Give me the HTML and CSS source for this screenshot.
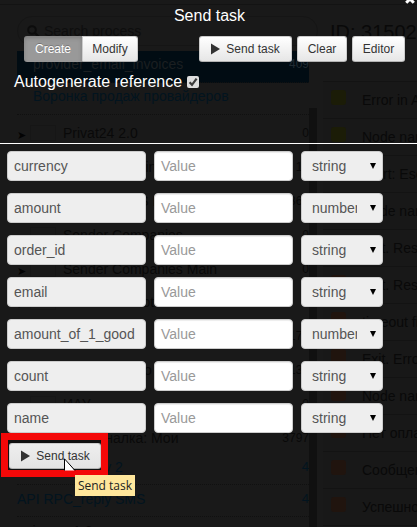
FILE: index.html
```html
<!DOCTYPE html>
<html lang="en">
<head>
<meta charset="utf-8">
<title>Send task</title>
<link rel="stylesheet" href="styles.css">
</head>
<body>
<div class="stage">
  <div class="page">
    <div class="processes">
      <div class="search">
        <svg width="13" height="13" viewBox="0 0 13 13"><circle cx="5" cy="5" r="3.8" fill="none" stroke="#0c0c0c" stroke-width="2"/><path d="M8 8l4 4" stroke="#0c0c0c" stroke-width="2.4"/></svg>
        <span>Search process</span>
      </div>
      <div class="proc active"><span>provider_email_invoices</span><b>409</b></div>
      <div class="proc link second"><span>Воронка продаж провайдеров</span></div>
      <div class="tree">
        <div class="folder"><i class="arrow">➤</i><i class="thumb"></i><span>Privat24 2.0</span><b>0</b></div>
        <div class="folder"><i class="arrow"></i><i class="thumb"></i><span>Privat marketing</span><b>10</b></div>
        <div class="folder"><i class="arrow"></i><i class="thumb"></i><span>Privat24 SMS H</span><b>368</b></div>
        <div class="folder"><i class="arrow"></i><i class="thumb"></i><span>Sender Companies</span><b>0</b></div>
        <div class="folder"><i class="arrow">➤</i><i class="thumb"></i><span>Sender Companies Main</span><b>0</b></div>
        <div class="folder"><i class="arrow">➤</i><i class="thumb"></i><span>Senderinnobot</span><b>0</b></div>
        <div class="folder"><i class="arrow"></i><i class="thumb"></i><span>Privat</span><b>177</b></div>
        <div class="folder"><i class="arrow"></i><i class="thumb"></i><span>Интернет-про</span><b>136</b></div>
        <div class="folder"><i class="arrow"></i><i class="thumb"></i><span>ИАУ</span><b>0</b></div>
        <div class="folder"><i class="arrow">➤</i><i class="thumb"></i><span>Коммуналка: Мои</span><b>3797</b></div>
      </div>
      <div class="proc link flat"><span>API RPC_reply 2</span><b>4</b></div>
      <div class="proc link flat"><span>API RPC_reply SMS</span><b>4</b></div>
      <div class="proc flat"><span>api_copy1 2</span></div>
    </div>
    <div class="scrollbar"></div>
    <div class="nodes">
      <h2>ID: 31502</h2>
      <div class="node"><i class="lime"></i>Error in API</div>
      <div class="node"><i class="lime"></i>Node name</div>
      <div class="node"><i></i>Start: Escal</div>
      <div class="node"><i></i>Node name</div>
      <div class="node"><i></i>Exit. Result</div>
      <div class="node"><i></i>Exit. Result</div>
      <div class="node"><i></i>timeout final</div>
      <div class="node"><i></i>Exit. Error</div>
      <div class="node"><i></i>Node name</div>
      <div class="node"><i></i>Нет оплаты</div>
      <div class="node"><i></i>Сообщение</div>
      <div class="node"><i></i>Успешно</div>
    </div>
  </div>

  <div class="modal">
    <svg class="close" width="10" height="10" viewBox="0 0 10 10"><path d="M1.2 1.2l7.6 7.6M8.8 1.2L1.2 8.8" stroke="#fff" stroke-width="3"/></svg>
    <h1>Send task</h1>
    <div class="toolbar">
      <div class="group"><button class="btn pressed">Create</button><button class="btn">Modify</button></div>
      <div class="actions">
        <button class="btn send"><svg width="9" height="12" viewBox="0 0 9 12"><path d="M0 .5L9 6 0 11.5z" fill="#333"/></svg>Send task</button>
        <button class="btn clear">Clear</button>
        <button class="btn editor">Editor</button>
      </div>
    </div>
    <div class="auto"><span>Autogenerate reference</span><i class="check"><svg width="12" height="12" viewBox="0 0 12 12"><path d="M2.6 6.2L5 8.8 9.6 2.6" fill="none" stroke="#3c3c3c" stroke-width="2.2"/></svg></i></div>
    <div class="params">
      <div class="field key">currency</div><div class="field value">Value</div><div class="field type"><span>string</span><i></i></div>
      <div class="field key">amount</div><div class="field value">Value</div><div class="field type"><span>number</span><i></i></div>
      <div class="field key">order_id</div><div class="field value">Value</div><div class="field type"><span>string</span><i></i></div>
      <div class="field key">email</div><div class="field value">Value</div><div class="field type"><span>string</span><i></i></div>
      <div class="field key">amount_of_1_good</div><div class="field value">Value</div><div class="field type"><span>number</span><i></i></div>
      <div class="field key">count</div><div class="field value">Value</div><div class="field type"><span>string</span><i></i></div>
      <div class="field key">name</div><div class="field value">Value</div><div class="field type"><span>string</span><i></i></div>
    </div>
    <div class="highlight">
      <button class="btn hover"><svg width="9" height="12" viewBox="0 0 9 12"><path d="M0 .5L9 6 0 11.5z" fill="#333"/></svg>Send task</button>
      <svg class="cursor" width="12" height="13" viewBox="0 0 12 13"><path d="M.5 0V12.5H10.5z" fill="#fff"/><path d="M.5 12.5V.8L11 12.5" fill="none" stroke="#000"/></svg>
      <div class="tip">Send task</div>
    </div>
  </div>
</div>
</body>
</html>
```

FILE: styles.css
```css
* { box-sizing: border-box; }
body {
  margin: 0;
  background: #191919;
  font-family: "Liberation Sans", Arial, sans-serif;
  font-size: 14px;
  overflow: hidden;
}
i, b { font-style: normal; font-weight: normal; }
.stage {
  display: grid;
  width: 417px;
  height: 527px;
  overflow: hidden;
}
.page, .modal { grid-area: 1 / 1; min-width: 0; min-height: 0; }

/* dimmed page */
.page {
  display: flex;
  height: 527px;
  overflow: hidden;
  padding-left: 17px;
  color: #090909;
  background: linear-gradient(#131313, #131313) 0 4px / 100% 1px no-repeat;
  white-space: nowrap;
}
.processes { width: 292px; flex: none; }
.search {
  display: flex;
  align-items: center;
  gap: 4px;
  width: 301px;
  height: 30px;
  margin: 16px 0 5px;
  padding-left: 9px;
  border: 1px solid #151515;
  border-radius: 15px;
  color: #0e0e0e;
}
.proc {
  display: flex;
  justify-content: space-between;
  align-items: center;
  height: 32px;
  padding-left: 16px;
  border-bottom: 1px dotted #101010;
}
.proc b, .folder b { font-size: 12px; }
.proc.flat b { font-size: 13px; }
.active { background: #010c13; color: #1b1f21; }
.active span, .active b { padding-bottom: 6px; }
.active b { font-size: 12px; color: #202b32; }
.link { color: #02141f; }
.second span { padding-bottom: 5px; }
.proc.flat { padding: 0 0 4px; }
.tree { height: 338px; padding-top: 1px; }
.folder {
  display: flex;
  align-items: center;
  height: 33.9px;
}
.arrow { width: 13px; font: 11px "DejaVu Sans", sans-serif; color: #030303; padding-top: 5px; }
.thumb { width: 26px; height: 16px; border: 1px solid #161616; margin-right: 7px; }
.folder span { flex: 1; }
.scrollbar { flex: none; width: 8px; margin-top: 108px; background: #101010; }
.nodes { flex: none; width: 110px; margin-left: 6px; }
.nodes h2 {
  margin: 0;
  height: 82px;
  padding: 21px 0 0 7px;
  font-size: 20px;
  line-height: 23px;
  font-weight: normal;
  border-bottom: 1px solid #131313;
}
.node {
  display: flex;
  align-items: center;
  gap: 16px;
  height: 37px;
  padding-left: 8px;
  border-bottom: 1px solid #131313;
  background: #181818;
}
.node i {
  flex: none;
  width: 15px;
  height: 15px;
  margin-bottom: 5px;
  border-radius: 3px;
  background: #20140e;
}
.node .lime { background: #1b1c07; }

/* modal */
.modal { position: relative; color: #fff; }
.close { position: absolute; left: 405px; top: -6px; }
.modal h1 {
  margin: 0;
  padding: 6px 0 0 2px;
  height: 36px;
  font-size: 16px;
  line-height: 19px;
  font-weight: normal;
  text-align: center;
}
.toolbar {
  display: flex;
  justify-content: space-between;
  padding: 0 12px 0 24px;
}
.group { display: flex; }
.actions { display: flex; gap: 5px; }
.btn {
  display: flex;
  align-items: center;
  justify-content: center;
  gap: 6px;
  height: 26px;
  padding: 0;
  border: 1px solid #ccc;
  border-bottom-color: #b3b3b3;
  border-radius: 3px;
  background: linear-gradient(#fff, #e6e6e6);
  color: #333;
  font: 12px "Liberation Sans", Arial, sans-serif;
  white-space: nowrap;
}
.group .btn { width: 56px; border-radius: 0 3px 3px 0; }
.group .pressed {
  width: 58px;
  border: 0;
  border-radius: 3px 0 0 3px;
  background: #999;
  color: #fff;
  text-shadow: 0 -1px 0 rgba(0, 0, 0, .25);
  box-shadow: inset 0 2px 4px rgba(0, 0, 0, .18);
}
.send { width: 93px; }
.clear { width: 50px; }
.editor { width: 53px; }
.auto {
  display: flex;
  gap: 5px;
  height: 82px;
  padding: 10px 0 0 14px;
  font-size: 16px;
  line-height: 19px;
  border-bottom: 1px solid #fff;
}
.check {
  width: 12px;
  height: 12px;
  margin-top: 4px;
  border-radius: 2px;
  background: #dedede;
}
.check svg { display: block; }
.params {
  display: grid;
  grid-template-columns: 139px 139px 82px;
  gap: 12px 8px;
  padding: 7px 0 0 7px;
}
.field {
  height: 30px;
  padding: 0 6px;
  border: 1px solid #ccc;
  border-radius: 4px;
  line-height: 28px;
  color: #555;
  background: #eee;
}
.value { background: #fff; color: #999; box-shadow: inset 0 1px 1px rgba(0, 0, 0, .075); }
.type { display: flex; align-items: center; justify-content: space-between; padding: 0 6px 0 10px; }
.type span { width: 45px; overflow: hidden; }
.type i { border: 3px solid transparent; border-top: 6px solid #000; border-bottom: 0; margin-bottom: 1px; }
.highlight {
  position: relative;
  width: 107px;
  height: 44px;
  margin-left: 1px;
  border: 7px solid #f40808;
  background: #111;
  padding: 3px 0 0 1px;
}
.hover { width: 92px; height: 26px; padding-left: 1px; background: linear-gradient(#eee, #e3e3e3); }
.cursor { position: absolute; left: 56px; top: 18px; }
.tip {
  position: absolute;
  left: 67px;
  top: 35px;
  width: 60px;
  height: 21px;
  background: #ffe79c;
  color: #222;
  font: 12px/21px "Open Sans", sans-serif;
  text-align: center;
  white-space: nowrap;
}
```
